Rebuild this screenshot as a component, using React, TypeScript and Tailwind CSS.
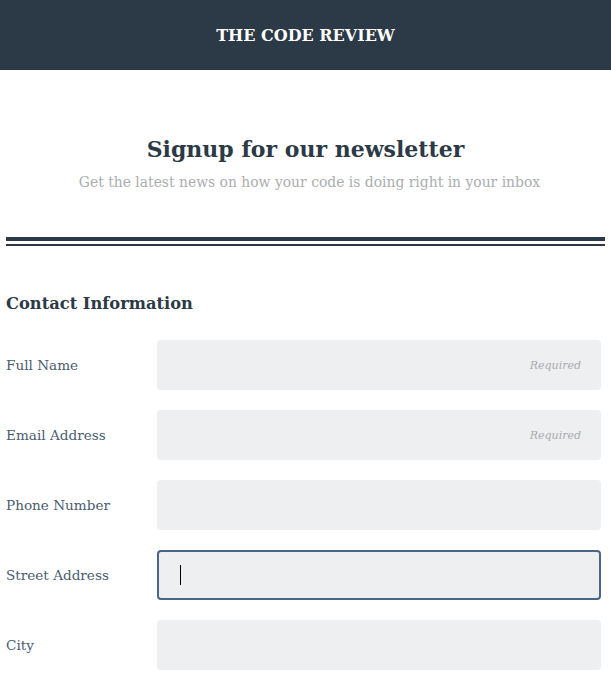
const serif = "font-['DejaVu_Serif',serif]";

interface FieldProps {
    label: string
    required?: boolean
    focused?: boolean
}

function Field(props: FieldProps) {
    return (
        <div className="flex items-center">
            <label className="w-[151px] shrink-0 text-[13.6px] text-[#4a5c70]">{props.label}</label>
            <div
                className={
                    props.focused
                        ? "flex items-center h-[50px] flex-1 rounded-[4px] bg-[#eeeff1] border-2 border-[#4a6585] px-[20px]"
                        : "flex items-center h-[50px] flex-1 rounded-[4px] bg-[#eeeff1] px-[20px]"
                }
            >
                {props.focused && <span className="w-px h-[20px] bg-black ml-[1px]" />}
                {props.required && (
                    <span className="ml-auto italic text-[11px] text-[#a9abae] pt-[2px]">Required</span>
                )}
            </div>
        </div>
    )
}

export default function App() {
    return (
        <div className={`${serif} bg-white min-h-[678px]`}>
            <header className="h-[70px] bg-[#2c3946] flex items-center justify-center">
                <h1 className="text-white font-bold text-[16px] pt-[1px]">THE CODE REVIEW</h1>
            </header>
            <div className="px-[6px]">
                <div className="flex flex-col items-center pt-[62px] pb-[44px]">
                    <h2 className="font-bold text-[22px] text-[#2c3946] leading-[34px]">Signup for our newsletter</h2>
                    <p className="text-[13.9px] text-[#abadb0] mt-[6px] pl-[8px]">Get the latest news on how your code is doing right in your inbox</p>
                </div>
                <div className="h-[4px] bg-[#2c3946]" />
                <div className="h-[2px] bg-[#2c3946] mt-[3px]" />
                <h3 className="font-bold text-[16.3px] text-[#2c3946] mt-[46px]">Contact Information</h3>
                <div className="flex flex-col gap-[20px] mt-[24px] pr-[4px]">
                    <Field label="Full Name" required />
                    <Field label="Email Address" required />
                    <Field label="Phone Number" />
                    <Field label="Street Address" focused />
                    <Field label="City" />
                </div>
            </div>
        </div>
    )
}
